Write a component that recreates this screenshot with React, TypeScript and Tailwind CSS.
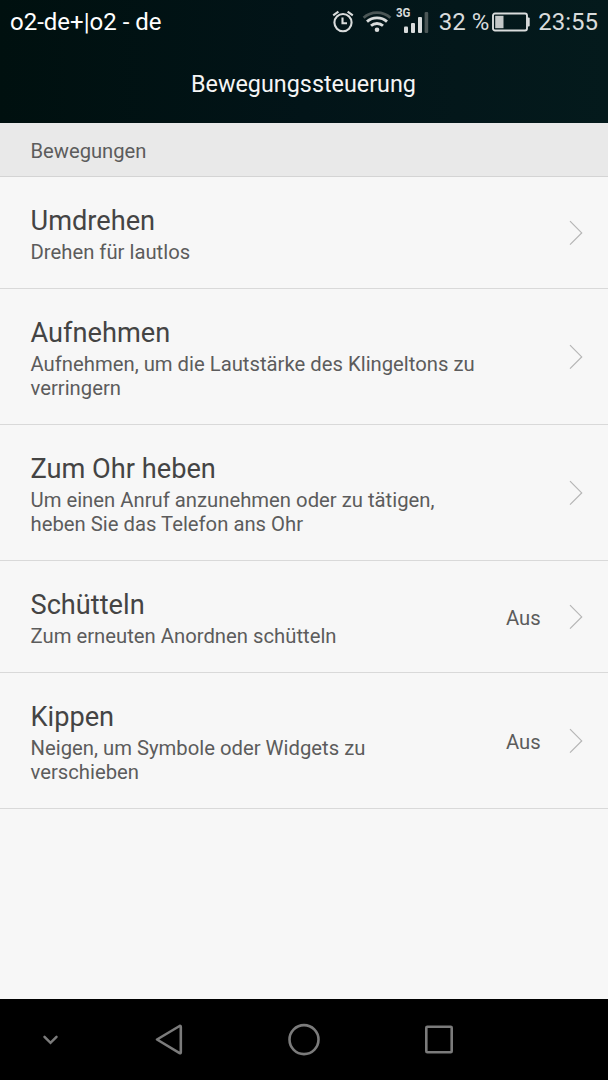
import {clsx} from "clsx";

type Item = {
  title: string;
  summary: string;
  value?: string;
  tall?: boolean;
};

const items: Item[] = [
  {title: "Umdrehen", summary: "Drehen für lautlos"},
  {title: "Aufnehmen", summary: "Aufnehmen, um die Lautstärke des Klingeltons zu verringern", tall: true},
  {title: "Zum Ohr heben", summary: "Um einen Anruf anzunehmen oder zu tätigen, heben Sie das Telefon ans Ohr", tall: true},
  {title: "Schütteln", summary: "Zum erneuten Anordnen schütteln", value: "Aus"},
  {title: "Kippen", summary: "Neigen, um Symbole oder Widgets zu verschieben", value: "Aus", tall: true},
];

function AlarmIcon() {
  return (
    <svg width="22" height="24" viewBox="0 0 22 24" fill="none" stroke="#d9dcdc" strokeWidth="2.1">
      <circle cx="11" cy="12.6" r="8.6" />
      <path d="M10.5 7.5v5.8h4.5" />
      <path d="M1.2 5.4 6.4 1.6M20.8 5.4 15.6 1.6" />
    </svg>
  );
}

function WifiIcon() {
  return (
    <svg width="30" height="24" viewBox="0 0 30 24" fill="none" strokeWidth="2.8">
      <path d="M1.6 7.8C9 .9 21 .9 28.4 7.8" stroke="#4b5656" />
      <path d="M5 11.6c5.5-5.1 14.5-5.1 20 0" stroke="#d9dcdc" />
      <path d="M9 15.8c3.3-3.1 8.7-3.1 12 0" stroke="#d9dcdc" />
      <circle cx="15" cy="19.8" r="2.3" fill="#d9dcdc" />
    </svg>
  );
}

function SignalIcon() {
  return (
    <svg width="34" height="28" viewBox="0 0 34 28" fill="#d9dcdc">
      <text x="0" y="11.3" fontSize="12" fontWeight="700" fontFamily="Roboto, sans-serif" textLength="14.5" lengthAdjust="spacingAndGlyphs">
        3G
      </text>
      <rect x="8" y="20.6" width="4" height="6.4" rx="1" />
      <rect x="15" y="17" width="4" height="10" rx="1" />
      <rect x="22" y="11" width="4" height="16" rx="1" />
      <rect x="28.6" y="6" width="3.6" height="21" rx="1" fill="#4b5656" />
    </svg>
  );
}

function BatteryIcon() {
  return (
    <svg width="38" height="20" viewBox="0 0 38 20">
      <rect x="1" y="1.5" width="34" height="17" rx="2" fill="none" stroke="#d9dcdc" strokeWidth="1.9" />
      <rect x="3.2" y="3.8" width="8.3" height="12.4" fill="#c4c8c8" />
      <path d="M35.5 5.5h1.2q1 0 1 1v7q0 1-1 1h-1.2z" fill="#d9dcdc" />
    </svg>
  );
}

function StatusBar() {
  return (
    <div className="flex h-[45px] items-center justify-between px-2.5 text-[24px] leading-none text-[#d9dcdc]">
      <span className="pb-0.5 text-white">o2-de+|o2 - de</span>
      <div className="flex items-center">
        <span className="-mt-0.5">
          <AlarmIcon />
        </span>
        <span className="-mt-px ml-2">
          <WifiIcon />
        </span>
        <span className="-mt-1.5 ml-1">
          <SignalIcon />
        </span>
        <span className="ml-[9px] pb-0.5">32 %</span>
        <span className="-mt-px ml-[3px]">
          <BatteryIcon />
        </span>
        <span className="ml-2 pb-0.5">23:55</span>
      </div>
    </div>
  );
}

function Row({title, summary, value, tall}: Item) {
  return (
    <li className={clsx("flex items-center border-b border-[#d9d9d9] pr-[25px] pl-[30.5px]", tall ? "h-[136px]" : "h-28")}>
      <div className="flex-1 pt-[3px]">
        <h2 className="text-[27.2px] leading-8 text-[#444]">{title}</h2>
        <p className="mt-[3px] max-w-[450px] text-[20.27px] leading-6 text-[#5c5c5c]">{summary}</p>
      </div>
      {value && <span className="ml-10 w-[35px] pt-[3px] text-[20.25px] text-[#5c5c5c]">{value}</span>}
      <svg className="ml-7 shrink-0" width="14" height="26" viewBox="0 0 14 26" fill="none" stroke="#b5b5b5" strokeWidth="1.2">
        <path d="M1 1.2 12.7 12.9 1 24.6" />
      </svg>
    </li>
  );
}

function NavBar() {
  return (
    <nav className="flex h-[81px] items-center bg-black pl-[42px]">
      <svg width="17" height="12" viewBox="0 0 17 12" fill="none" stroke="#7b7b7b" strokeWidth="2.5" strokeLinecap="round">
        <path d="M2.5 2.8 8.5 8.8 14.5 2.8" />
      </svg>
      <svg className="ml-24" width="30" height="34" viewBox="0 0 30 34" fill="none" stroke="#7b7b7b" strokeWidth="2.6" strokeLinejoin="round">
        <path d="M2 16.5 24.6 3q1.2-.5 1.2.9v25.4q0 1.4-1.2.8z" />
      </svg>
      <svg className="ml-[102px]" width="34" height="34" viewBox="0 0 34 34" fill="none" stroke="#7b7b7b" strokeWidth="2.6">
        <circle cx="17" cy="16.6" r="14.5" />
      </svg>
      <svg className="ml-[103px]" width="30" height="30" viewBox="0 0 30 30" fill="none" stroke="#7b7b7b" strokeWidth="2.6">
        <rect x="2.3" y="1.8" width="25.4" height="25.4" rx="1" />
      </svg>
    </nav>
  );
}

export default function App() {
  return (
    <div className="flex h-[1080px] w-[608px] flex-col bg-[#f7f7f7] font-['Roboto',sans-serif]">
      <header className="h-[123px] bg-linear-to-r from-[#00100f] via-[#021418] to-[#041a1c]">
        <StatusBar />
        <h1 className="pt-[23px] pr-px text-center text-[23.35px] leading-8 text-[#f5f5f5]">Bewegungssteuerung</h1>
      </header>
      <div className="flex h-[54px] items-center border-b border-[#d4d4d4] bg-[#e9e9e9] pt-[3px] pl-[30.5px] text-[20.2px] text-[#5c5c5c]">
        Bewegungen
      </div>
      <ul className="flex-1">
        {items.map((item) => (
          <Row key={item.title} {...item} />
        ))}
      </ul>
      <NavBar />
    </div>
  );
}
